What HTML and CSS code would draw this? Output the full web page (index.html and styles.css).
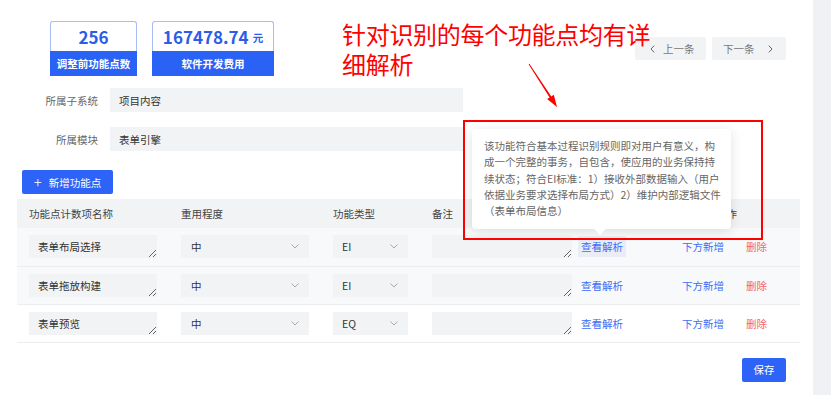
FILE: index.html
```html
<!DOCTYPE html>
<html lang="zh-CN">
<head>
    <meta charset="UTF-8">
    <title>功能点解析</title>
    <link rel="stylesheet" href="styles.css">
</head>
<body>
<div class="page">
    <div class="main">
        <div class="top">
            <div class="stats">
                <div class="stat stat-count">
                    <div class="stat-value">256</div>
                    <div class="stat-label">调整前功能点数</div>
                </div>
                <div class="stat stat-cost">
                    <div class="stat-value">167478.74 <small>元</small></div>
                    <div class="stat-label">软件开发费用</div>
                </div>
            </div>
            <div class="pager">
                <button class="pager-btn pager-prev">
                    <svg class="pager-icon" width="5" height="8" viewBox="0 0 5 8"><path d="M4.2 0.6 L1 4 L4.2 7.4" fill="none" stroke="#666" stroke-width="1"/></svg>
                    <span>上一条</span>
                </button>
                <button class="pager-btn pager-next">
                    <span>下一条</span>
                    <svg class="pager-icon" width="5" height="8" viewBox="0 0 5 8"><path d="M0.8 0.6 L4 4 L0.8 7.4" fill="none" stroke="#666" stroke-width="1"/></svg>
                </button>
            </div>
        </div>

        <div class="form">
            <div class="form-row">
                <label class="form-label">所属子系统</label>
                <div class="form-input">项目内容</div>
            </div>
            <div class="form-row">
                <label class="form-label">所属模块</label>
                <div class="form-input">表单引擎</div>
            </div>
        </div>

        <button class="btn btn-add"><span class="plus">+</span>新增功能点</button>

        <table class="fp-table">
            <colgroup>
                <col class="c-name"><col class="c-reuse"><col class="c-type"><col class="c-note"><col class="c-op">
            </colgroup>
            <thead>
                <tr>
                    <th>功能点计数项名称</th>
                    <th>重用程度</th>
                    <th>功能类型</th>
                    <th>备注</th>
                    <th class="th-op">操作</th>
                </tr>
            </thead>
            <tbody>
                <tr class="row-hover">
                    <td><textarea class="cell-text name-text" rows="1" readonly>表单布局选择</textarea></td>
                    <td><div class="cell-select reuse-select">中<svg class="chev" width="8" height="5" viewBox="0 0 8 5"><path d="M0.5 0.5 L4 4 L7.5 0.5" fill="none" stroke="#aaa" stroke-width="1"/></svg></div></td>
                    <td><div class="cell-select type-select">EI<svg class="chev" width="8" height="5" viewBox="0 0 8 5"><path d="M0.5 0.5 L4 4 L7.5 0.5" fill="none" stroke="#aaa" stroke-width="1"/></svg></div></td>
                    <td><textarea class="cell-text note-text" rows="1" readonly></textarea></td>
                    <td class="td-op"><a class="op op-view active">查看解析</a><a class="op op-add">下方新增</a><a class="op op-del">删除</a></td>
                </tr>
                <tr class="row-stripe">
                    <td><textarea class="cell-text name-text" rows="1" readonly>表单拖放构建</textarea></td>
                    <td><div class="cell-select reuse-select">中<svg class="chev" width="8" height="5" viewBox="0 0 8 5"><path d="M0.5 0.5 L4 4 L7.5 0.5" fill="none" stroke="#aaa" stroke-width="1"/></svg></div></td>
                    <td><div class="cell-select type-select">EI<svg class="chev" width="8" height="5" viewBox="0 0 8 5"><path d="M0.5 0.5 L4 4 L7.5 0.5" fill="none" stroke="#aaa" stroke-width="1"/></svg></div></td>
                    <td><textarea class="cell-text note-text" rows="1" readonly></textarea></td>
                    <td class="td-op"><a class="op op-view">查看解析</a><a class="op op-add">下方新增</a><a class="op op-del">删除</a></td>
                </tr>
                <tr>
                    <td><textarea class="cell-text name-text" rows="1" readonly>表单预览</textarea></td>
                    <td><div class="cell-select reuse-select">中<svg class="chev" width="8" height="5" viewBox="0 0 8 5"><path d="M0.5 0.5 L4 4 L7.5 0.5" fill="none" stroke="#aaa" stroke-width="1"/></svg></div></td>
                    <td><div class="cell-select type-select">EQ<svg class="chev" width="8" height="5" viewBox="0 0 8 5"><path d="M0.5 0.5 L4 4 L7.5 0.5" fill="none" stroke="#aaa" stroke-width="1"/></svg></div></td>
                    <td><textarea class="cell-text note-text" rows="1" readonly></textarea></td>
                    <td class="td-op"><a class="op op-view">查看解析</a><a class="op op-add">下方新增</a><a class="op op-del">删除</a></td>
                </tr>
            </tbody>
        </table>

        <div class="footer">
            <button class="btn btn-save">保存</button>
        </div>

        <!-- annotation layer -->
        <div class="note-title"><div class="note-line">针对识别的每个功能点均有详</div><div class="note-line">细解析</div></div>
        <svg class="note-arrow" width="45" height="60" viewBox="0 0 45 60">
            <polygon points="9.4,8.75 31.29,41.39 33.8,39.76 37,52 27.1,44.12 29.61,42.49 8.6,9.25" fill="#ff0000"/>
        </svg>
        <div class="note-box"></div>
        <div class="tip">该功能符合基本过程识别规则即对用户有意义，构<br>成一个完整的事务，自包含，使应用的业务保持持<br>续状态；符合EI标准：1）接收外部数据输入（用户<br>依据业务要求选择布局方式）2）维护内部逻辑文件<br>（表单布局信息）</div>
    </div>
    <div class="side"></div>
</div>
</body>
</html>
```

FILE: styles.css
```css
* {box-sizing: border-box;}
body {margin: 0; background: #fff; font-family: "Noto Sans CJK SC", "Noto Sans", sans-serif; font-size: 10.5px; color: #333;}
button {font-family: inherit; font-size: inherit; border: 0; cursor: pointer;}

.page {display: flex; height: 395px; overflow: hidden;}
.main {position: relative; width: 813px; padding-top: 21px;}
.side {flex: 1; background: #f0f1f4;}

/* top stats + pager */
.top {display: flex; justify-content: space-between; align-items: flex-start; padding: 0 27px 0 50px;}
.stats {display: flex; gap: 15px;}
.stat {display: flex; flex-direction: column; height: 55px;}
.stat-count {width: 87px;}
.stat-cost {width: 122px;}
.stat-value {
    height: 30px;
    border: 1px solid #a8bcf6;
    border-bottom: 0;
    border-radius: 3px 3px 0 0;
    display: flex;
    align-items: center;
    justify-content: center;
    color: #2d5bea;
    font-weight: 700;
    font-size: 17px;
    line-height: 1;
}
.stat-value small {font-size: 10.5px; font-weight: 700; margin-left: 4px; margin-top: 3px;}
.stat-label {
    flex: 1;
    background: #2b62f6;
    color: #fff;
    font-weight: 700;
    display: flex;
    align-items: center;
    justify-content: center;
}

.pager {display: flex; gap: 6px; margin-top: 16px;}
.pager-btn {
    height: 23px;
    background: #f2f3f5;
    color: #777;
    display: flex;
    align-items: center;
    white-space: nowrap;
    border-radius: 2px;
}
.pager-icon {display: block; flex: none;}
.pager-prev {width: 71px; padding: 0 0 0 15px; gap: 8px;}
.pager-next {width: 74px; padding: 0 0 0 11px; gap: 13px;}

/* form */
.form {margin-top: 12px; display: flex; flex-direction: column; gap: 15px;}
.form-row {display: flex; align-items: center; gap: 12px;}
.form-label {width: 98px; text-align: right; color: #666;}
.form-input {width: 353px; height: 24px; background: #f2f3f5; padding-left: 9px; display: flex; align-items: center; color: #333;}

.btn {background: #2e63f7; color: #fff; border-radius: 2px; display: flex; align-items: center; justify-content: center;}
.btn-add {margin: 19px 0 0 22px; width: 91px; height: 24px; gap: 7px;}
.btn-add .plus {font-size: 15px; line-height: 1; font-weight: 300; margin-top: -2px;}

/* table */
.fp-table {margin: 5px 0 0 17px; width: 783px; table-layout: fixed; border-collapse: collapse;}
.c-name {width: 152px;}
.c-reuse {width: 152px;}
.c-type {width: 99px;}
.c-note {width: 158px;}
.c-op {width: 222px;}
.fp-table th {height: 29px; background: #f2f3f5; font-weight: 400; text-align: left; padding: 0 0 0 12px; color: #444;}
.fp-table th.th-op {padding-left: 138px;}
.fp-table td {height: 38px; padding: 0 0 0 12px; border-bottom: 1px solid #ebedf0;}
.fp-table td.td-op {padding-left: 0;}
.row-hover td, .row-stripe td {background: #f8f9fb;}

.cell-text {
    display: block;
    height: 23px;
    border: 0;
    background: #f2f3f5;
    padding: 5px 9px;
    font-family: inherit;
    font-size: 10.5px;
    line-height: 13px;
    color: #333;
    overflow: hidden;
    outline: none;
    resize: both;
}
.name-text {width: 128px;}
.note-text {width: 140px;}

.cell-select {
    height: 23px;
    background: #f2f3f5;
    display: flex;
    align-items: center;
    justify-content: space-between;
    padding: 0 10px 0 10px;
}
.reuse-select {width: 128px;}
.type-select {width: 75px; padding-left: 9px;}
.chev {display: block;}

.op {display: inline-block; padding: 3px 3px; line-height: 15px; color: #3d6df5; cursor: pointer;}
.op.active {background: #eaedf5;}
.op-add {margin-left: 53px;}
.op-del {margin-left: 16px; color: #f26666;}

.footer {display: flex; justify-content: flex-end; padding: 15px 27px 0 0;}
.btn-save {width: 44px; height: 24px;}

/* annotation overlay */
.note-title {position: absolute; left: 342px; top: 19px; color: #ff0000; font-size: 24px; letter-spacing: -0.3px;}
.note-line {height: 30px; line-height: 30px; white-space: nowrap;}
.note-arrow {position: absolute; left: 520px; top: 55px;}
.note-box {position: absolute; left: 463px; top: 120px; width: 300px; height: 120px; border: 2px solid #ff0000;}

.tip {
    position: absolute;
    left: 472px;
    top: 129px;
    width: 259px;
    height: 100px;
    background: #fff;
    border-radius: 4px;
    box-shadow: 0 2px 12px rgba(0, 0, 0, 0.12);
    padding: 9px 0 0 12px;
    color: #666;
    font-size: 10.5px;
    line-height: 16.3px;
    white-space: nowrap;
}
.tip::after {
    content: "";
    position: absolute;
    left: 124px;
    bottom: -4px;
    width: 8px;
    height: 8px;
    background: #fff;
    transform: rotate(45deg);
}
```
